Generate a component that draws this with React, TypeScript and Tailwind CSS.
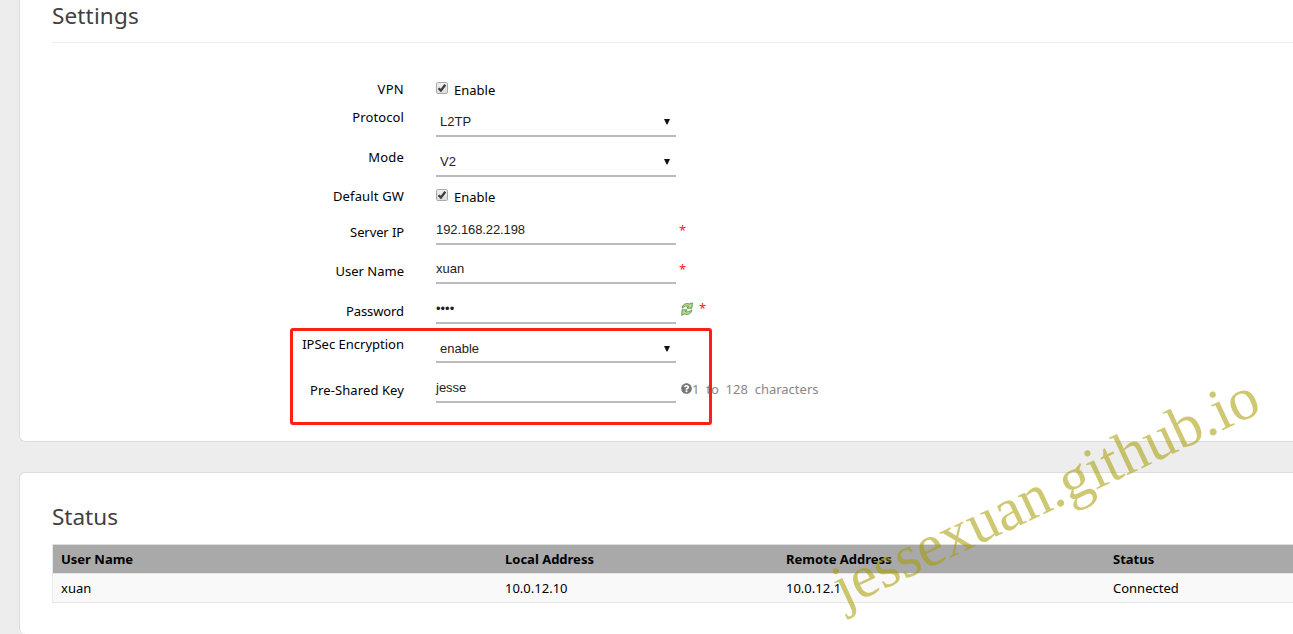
import type { ReactNode } from 'react';
import { FaQuestionCircle } from 'react-icons/fa';

type RowProps = { label: string; row: string; labelPad: string; fieldPad: string; children: ReactNode };

function Row({ label, row, labelPad, fieldPad, children }: RowProps) {
  return (
    <div className={`flex ${row}`}>
      <label className={`w-[352px] shrink-0 text-right ${labelPad}`}>{label}</label>
      <div className={`ml-8 flex ${fieldPad}`}>{children}</div>
    </div>
  );
}

function Check() {
  return (
    <>
      <svg className="mt-[2px] h-[12px] w-[12px]" viewBox="0 0 12 12">
        <defs>
          <linearGradient id="box" x1="0" y1="0" x2="0" y2="1">
            <stop offset="0" stopColor="#f0f0f0" />
            <stop offset="1" stopColor="#dcdcdc" />
          </linearGradient>
        </defs>
        <rect x="0.5" y="0.5" width="11" height="11" rx="1.2" fill="url(#box)" stroke="#a9a9a9" />
        <path d="M2.6 6.2 4.9 8.6 9.3 2.8" fill="none" stroke="#3b3b3b" strokeWidth="2.3" />
      </svg>
      <span className="ml-[6px]">Enable</span>
    </>
  );
}

const control = 'w-[240px] border-b-2 border-[#bbbbbb] font-["Liberation_Sans",sans-serif] text-[13px] text-[#222]';

function Select({ value, pad }: { value: string; pad: string }) {
  return (
    <div className={`${control} flex justify-between pl-1 ${pad}`}>
      <span>{value}</span>
      <svg className="mt-[6px] mr-[6px] h-[7px] w-[6px]" viewBox="0 0 6 7">
        <path d="M0 1h6L3.4 6.5h-.8z" fill="#111" />
      </svg>
    </div>
  );
}

function Input({ value, pad }: { value: string; pad: string }) {
  return <div className={`${control} ${pad}`}>{value}</div>;
}

function Refresh() {
  return (
    <svg className="mt-[18px] ml-[5px] h-[14px] w-[12px]" viewBox="0 0 12 14">
      <g fill="#b4e08f" stroke="#4a8434" strokeWidth="0.8" strokeLinejoin="round">
        <path d="M1.2 6.2C1.4 2.6 4.4.7 8.6 2L11.3.8 10.9 6.2H6L7.7 4.4C5.4 3.6 3.2 4.4 1.2 6.2Z" />
        <path d="M10.8 7.8c-.2 3.6-3.2 5.5-7.4 4.2L.7 13.2 1.1 7.8H6L4.3 9.6c2.3.8 4.5 0 6.5-1.8Z" />
      </g>
    </svg>
  );
}

function Star({ place }: { place: string }) {
  return <span className={`text-[#ff2020] ${place}`}>*</span>;
}

const cols = 'grid grid-cols-[444px_281px_327px_1fr] pl-2';

export default function App() {
  return (
    <div className="relative h-[634px] w-[1293px] overflow-hidden bg-[#ededed] pl-[19px] font-['Noto_Sans',sans-serif] text-[13px] leading-5 text-black">
      <section className="h-[442px] rounded-bl-[6px] border-b border-l border-[#dcdcdc] bg-white pl-8">
        <h2 className="h-[43px] border-b border-[#eeeeee] text-[22.5px] leading-[31px] tracking-[0.15px] text-[#404040]">Settings</h2>
        <form className="pt-8">
          <Row label="VPN" row="h-7" labelPad="pt-1 tracking-[0.3px]" fieldPad="pt-[5px]"><Check /></Row>
          <Row label="Protocol" row="h-[34px]" labelPad="pt-1 tracking-[0.1px]" fieldPad=""><Select value="L2TP" pad="pt-[9px]" /></Row>
          <Row label="Mode" row="h-10" labelPad="pt-[10px] tracking-[0.2px]" fieldPad=""><Select value="V2" pad="pt-[15px]" /></Row>
          <Row label="Default GW" row="h-[33px]" labelPad="pt-[9px] tracking-[0.15px]" fieldPad="pt-[10px]"><Check /></Row>
          <Row label="Server IP" row="h-[35px]" labelPad="pt-3 tracking-[-0.1px]" fieldPad="">
            <Input value="192.168.22.198" pad="pt-[10px] tracking-[-0.1px]" /><Star place="ml-[3px] pt-[10px]" />
          </Row>
          <Row label="User Name" row="h-[39px]" labelPad="pt-4" fieldPad="">
            <Input value="xuan" pad="pt-[14px]" /><Star place="ml-[3px] pt-[14px]" />
          </Row>
          <Row label="Password" row="h-10" labelPad="pt-[17px] tracking-[-0.1px]" fieldPad="">
            <Input value="••••" pad="pt-[15px]" /><Refresh /><Star place="ml-[6px] pt-[14px]" />
          </Row>
          <Row label="IPSec Encryption" row="h-[39px]" labelPad="pt-[10px]" fieldPad=""><Select value="enable" pad="pt-[15px]" /></Row>
          <Row label="Pre-Shared Key" row="h-10" labelPad="pt-[17px] tracking-[0.1px]" fieldPad="">
            <Input value="jesse" pad="pt-[15px]" />
            <FaQuestionCircle className="mt-5 ml-[5px] h-[11px] w-[11px] text-[#777]" />
            <span className="pt-4 whitespace-nowrap text-[#888] [word-spacing:3.4px]">1 to 128 characters</span>
          </Row>
        </form>
      </section>
      <section className="mt-[30px] h-[162px] rounded-l-[6px] border-t border-l border-[#dcdcdc] bg-white pt-7 pl-8">
        <h2 className="h-[43px] text-[22.5px] leading-[31px] text-[#404040]">Status</h2>
        <div className="border-l border-[#e8e8e8]">
          <div className={`${cols} h-[29px] border-t border-[#dddddd] bg-[#a9a9a9] pt-1 font-bold`}>
            <span>User Name</span><span>Local Address</span><span>Remote Address</span><span>Status</span>
          </div>
          <div className={`${cols} h-[30px] border-y border-[#e5e5e5] bg-[#f9f9f9] pt-1`}>
            <span>xuan</span><span>10.0.12.10</span><span>10.0.12.1</span><span>Connected</span>
          </div>
        </div>
      </section>
      <div className="absolute top-[328px] left-[290px] h-[97px] w-[422px] rounded-[3px] border-3 border-[#ff2012]" />
      <div className="absolute top-[546px] left-[843px] h-[60px] origin-bottom-left -rotate-[25.1deg] font-['Liberation_Serif',serif] text-[60px] leading-[84px] whitespace-nowrap text-[#a89b00]/55">jessexuan.github.io</div>
    </div>
  );
}
